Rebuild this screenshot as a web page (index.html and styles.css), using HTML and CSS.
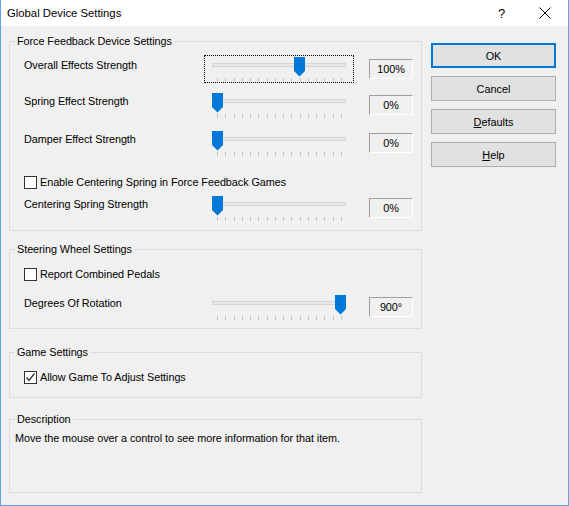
FILE: index.html
```html
<!DOCTYPE html>
<html lang="en">
<head>
  <meta charset="UTF-8">
  <title>Global Device Settings</title>
  <link rel="stylesheet" href="styles.css">
</head>
<body>
  <div class="window">
    <div class="titlebar">
      <span class="title">Global Device Settings</span>
      <span class="caption-help">?</span>
      <span class="caption-close">
        <svg width="12" height="12" viewBox="0 0 12 12"><path d="M0.5 0.5 L11.5 11.5 M11.5 0.5 L0.5 11.5" stroke="#000" stroke-width="1" fill="none"/></svg>
      </span>
    </div>

    <div class="dialog">
      <div class="groups">
        <fieldset class="group">
          <legend>Force Feedback Device Settings</legend>
          <div class="group-body ffb">
            <div class="row row-overall">
              <span class="label">Overall Effects Strength</span>
              <div class="slider focused">
                <div class="track"></div>
                <div class="ticks"><i></i><i></i><i></i><i></i><i></i><i></i><i></i><i></i><i></i><i></i><i></i><i></i><i></i><i></i><i></i><i></i></div>
                <svg class="thumb" style="left: 89px" width="11" height="20" viewBox="0 0 11 20"><path d="M0 0 H11 V14 L5.5 19.5 L0 14 Z" fill="#0078d7"/></svg>
              </div>
              <span class="value">100%</span>
            </div>
            <div class="row row-spring">
              <span class="label">Spring Effect Strength</span>
              <div class="slider">
                <div class="track"></div>
                <div class="ticks"><i></i><i></i><i></i><i></i><i></i><i></i><i></i><i></i><i></i><i></i><i></i><i></i><i></i><i></i><i></i><i></i></div>
                <svg class="thumb" style="left: 7px" width="11" height="20" viewBox="0 0 11 20"><path d="M0 0 H11 V14 L5.5 19.5 L0 14 Z" fill="#0078d7"/></svg>
              </div>
              <span class="value">0%</span>
            </div>
            <div class="row row-damper">
              <span class="label">Damper Effect Strength</span>
              <div class="slider">
                <div class="track"></div>
                <div class="ticks"><i></i><i></i><i></i><i></i><i></i><i></i><i></i><i></i><i></i><i></i><i></i><i></i><i></i><i></i><i></i><i></i></div>
                <svg class="thumb" style="left: 7px" width="11" height="20" viewBox="0 0 11 20"><path d="M0 0 H11 V14 L5.5 19.5 L0 14 Z" fill="#0078d7"/></svg>
              </div>
              <span class="value">0%</span>
            </div>
            <label class="check row-centering-check">
              <span class="box"></span>
              <span>Enable Centering Spring in Force Feedback Games</span>
            </label>
            <div class="row row-centering">
              <span class="label">Centering Spring Strength</span>
              <div class="slider">
                <div class="track"></div>
                <div class="ticks"><i></i><i></i><i></i><i></i><i></i><i></i><i></i><i></i><i></i><i></i><i></i><i></i><i></i><i></i><i></i><i></i></div>
                <svg class="thumb" style="left: 7px" width="11" height="20" viewBox="0 0 11 20"><path d="M0 0 H11 V14 L5.5 19.5 L0 14 Z" fill="#0078d7"/></svg>
              </div>
              <span class="value">0%</span>
            </div>
          </div>
        </fieldset>

        <fieldset class="group wheel">
          <legend>Steering Wheel Settings</legend>
          <div class="group-body">
            <label class="check pedals-check">
              <span class="box"></span>
              <span>Report Combined Pedals</span>
            </label>
            <div class="row row-rotation">
              <span class="label">Degrees Of Rotation</span>
              <div class="slider">
                <div class="track"></div>
                <div class="ticks"><i></i><i></i><i></i><i></i><i></i><i></i><i></i><i></i><i></i><i></i><i></i><i></i><i></i><i></i><i></i><i></i></div>
                <svg class="thumb" style="left: 130px" width="11" height="20" viewBox="0 0 11 20"><path d="M0 0 H11 V14 L5.5 19.5 L0 14 Z" fill="#0078d7"/></svg>
              </div>
              <span class="value">900°</span>
            </div>
          </div>
        </fieldset>

        <fieldset class="group game">
          <legend>Game Settings</legend>
          <div class="group-body">
            <label class="check game-check">
              <span class="box checked">
                <svg width="11" height="11" viewBox="0 0 11 11"><path d="M1.5 5.5 L4 8.5 L9.5 1.5" stroke="#333" stroke-width="1.3" fill="none"/></svg>
              </span>
              <span>Allow Game To Adjust Settings</span>
            </label>
          </div>
        </fieldset>

        <fieldset class="group description">
          <legend>Description</legend>
          <div class="group-body desc-body">
            Move the mouse over a control to see more information for that item.
          </div>
        </fieldset>
      </div>

      <div class="buttons">
        <button class="btn default">OK</button>
        <button class="btn">Cancel</button>
        <button class="btn"><u>D</u>efaults</button>
        <button class="btn"><u>H</u>elp</button>
      </div>
    </div>
  </div>
</body>
</html>
```

FILE: styles.css
```css
* {
  box-sizing: border-box;
}

body {
  margin: 0;
  width: 569px;
  height: 506px;
  overflow: hidden;
  font-family: "Liberation Sans", Arial, sans-serif;
  font-size: 10.85px;
  letter-spacing: -0.06px;
  color: #000;
}

.window {
  width: 569px;
  height: 506px;
  background-color: #f0f0f0;
  border: 1px solid #5ba4ec;
  border-top: none;
}

.titlebar {
  display: flex;
  align-items: center;
  height: 26px;
  background-color: #fff;
  margin: 0 -1px;
  padding: 0 0 0 6px;
  border-left: 1px solid #5ba4ec;
  border-right: 1px solid #5ba4ec;
}

.title {
  flex: 1;
  font-size: 11.3px;
  letter-spacing: 0;
}

.caption-help {
  font-size: 13px;
  width: 46px;
  padding-left: 5px;
  text-align: center;
}

.caption-close {
  display: flex;
  justify-content: center;
  width: 46px;
}

.dialog {
  display: flex;
  padding: 8px 0 0 8px;
}

.groups {
  width: 413px;
}

.group {
  margin: 0;
  padding: 0;
  border: 1px solid #dcdcdc;
  min-width: 0;
}

.group legend {
  margin-left: 5px;
  padding: 0 2px;
  line-height: 14px;
}

.group-body {
  padding: 0 7px 0 14px;
}

.row {
  display: flex;
  align-items: flex-start;
  height: 28px;
}

.label {
  width: 180px;
  margin-top: 3px;
  line-height: 14px;
}

.slider {
  position: relative;
  width: 150px;
  height: 28px;
  border: 1px solid transparent;
}

.slider.focused {
  border: 1px dotted #000;
}

.track {
  height: 4px;
  margin: 7px 7px 0;
  background-color: #e7e7e7;
  border: 1px solid #d6d6d6;
}

.ticks {
  display: flex;
  justify-content: space-between;
  width: 125px;
  height: 4px;
  margin: 11px 0 0 12px;
}

.ticks i {
  width: 1px;
  height: 4px;
  background-color: #c4c4c4;
}

.thumb {
  position: absolute;
  top: 1px;
}

.value {
  width: 44px;
  height: 20px;
  margin: 4px 0 0 15px;
  line-height: 18px;
  text-align: center;
  border-top: 1px solid #a0a0a0;
  border-left: 1px solid #a0a0a0;
  border-right: 1px solid #fff;
  border-bottom: 1px solid #fff;
}

.check {
  display: flex;
  align-items: center;
  height: 14px;
  line-height: 14px;
}

.box {
  display: flex;
  align-items: center;
  justify-content: center;
  width: 13px;
  height: 13px;
  margin-right: 3px;
  background-color: #fff;
  border: 1px solid #333;
}

/* force feedback group */
.ffb {
  padding-bottom: 8px;
}

.row-overall {
  margin-top: 7px;
}

.row-spring {
  margin-top: 8px;
}

.row-damper {
  margin-top: 10px;
}

.row-centering-check {
  margin-top: 18px;
}

.row-centering {
  margin-top: 5px;
}

/* steering wheel group */
.wheel {
  margin-top: 11px;
}

.wheel .group-body {
  padding-bottom: 7px;
}

.pedals-check {
  margin-top: 11px;
}

.row-rotation {
  margin-top: 12px;
}

/* game group */
.game {
  margin-top: 16px;
}

.game .group-body {
  padding-bottom: 13px;
}

.game-check {
  margin-top: 11px;
}

/* description */
.description {
  margin-top: 14px;
  height: 81px;
}

.desc-body {
  padding: 5px 0 0 5px;
  line-height: 14px;
}

.buttons {
  display: flex;
  flex-direction: column;
  gap: 8px;
  margin: 9px 0 0 9px;
}

.btn {
  width: 125px;
  height: 25px;
  padding: 0;
  font-family: inherit;
  font-size: 10.85px;
  color: #000;
  background-color: #e1e1e1;
  border: 1px solid #adadad;
}

.btn.default {
  border: 2px solid #0078d7;
}
```
